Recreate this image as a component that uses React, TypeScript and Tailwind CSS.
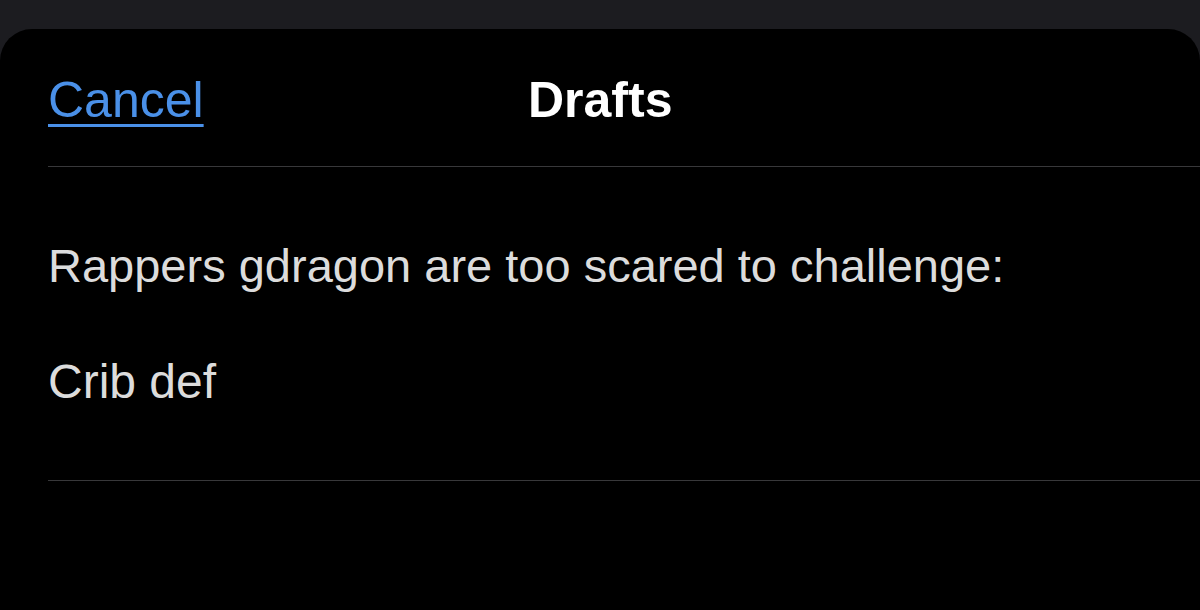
export default function App() {
  return (
    <div className="h-[610px] w-[1200px] overflow-hidden bg-[#1c1c20] pt-[29px]" style={{ fontFamily: '"Liberation Sans", Arial, sans-serif' }}>
      <div className="h-[600px] rounded-t-[32px] bg-black">
        <div className="relative ml-[48px] flex h-[138px] items-center border-b border-[#38383a] pt-[4px]">
          <span className="text-[50px] leading-none text-[#4a90e8] underline decoration-[3px] underline-offset-[7px]">Cancel</span>
          <span className="absolute left-[480px] text-[50px] font-bold leading-none text-white">Drafts</span>
        </div>
        <div className="ml-[48px] flex h-[314px] flex-col border-b border-[#38383a] pt-[75px] text-[#dcdcdc]">
          <p className="text-[47px] leading-none">Rappers gdragon are too scared to challenge:</p>
          <p className="mt-[69px] text-[48px] leading-none">Crib def</p>
        </div>
      </div>
    </div>
  );
}
